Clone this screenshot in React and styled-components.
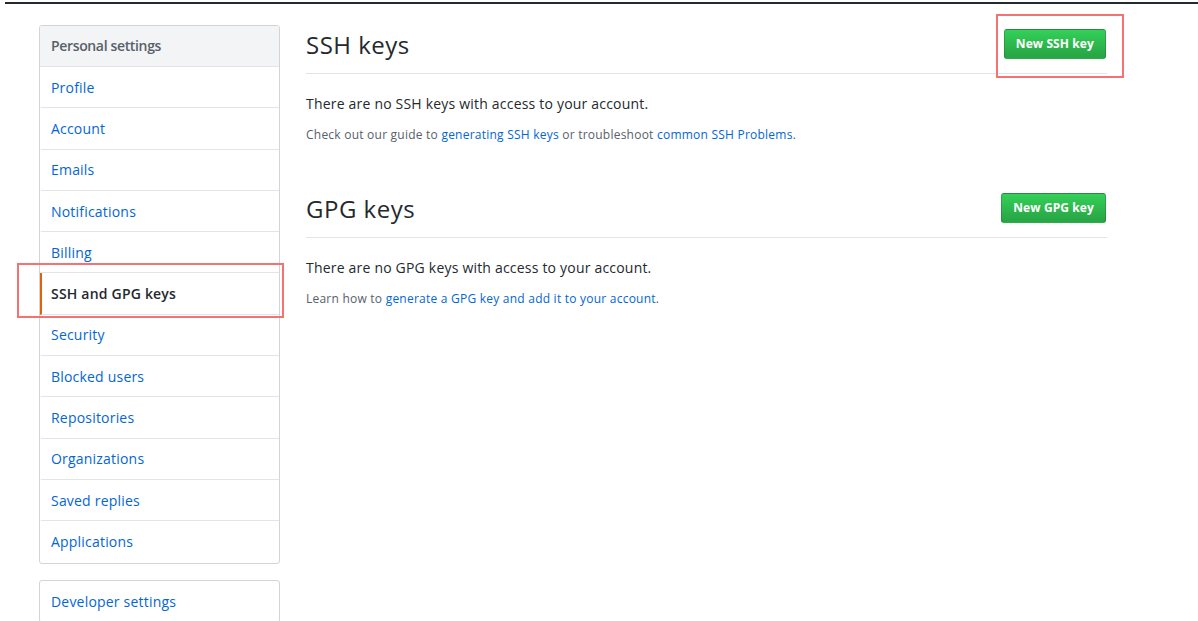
import React from "react";
import styled, { createGlobalStyle } from "styled-components";

const Global = createGlobalStyle`
  html, body { margin: 0; padding: 0; background: #fff; }
  body { font-family: "Open Sans", "Liberation Sans", sans-serif; color: #24292e; }
  * { box-sizing: border-box; }
`;

const Page = styled.div`
  position: relative;
  width: 1198px;
  height: 621px;
  overflow: hidden;
`;

const TopRule = styled.div`
  margin-left: 5px;
  margin-top: 2px;
  height: 2px;
  background: #24292e;
`;

const Layout = styled.div`
  display: flex;
  align-items: flex-start;
  padding: 21px 0 0 39px;
`;

const Sidebar = styled.nav`
  width: 241px;
  flex-shrink: 0;
  display: flex;
  flex-direction: column;
  gap: 16px;
`;

const Menu = styled.div`
  border: 1px solid #d1d5da;
  border-radius: 3px;
  overflow: hidden;
`;

const MenuHeading = styled.div`
  height: 41px;
  display: flex;
  align-items: center;
  padding: 0 11px 2px;
  background: #f3f4f6;
  border-bottom: 1px solid #e1e4e8;
  font-size: 14px;
  font-weight: 600;
  letter-spacing: -0.35px;
  color: #586069;
`;

const MenuItem = styled.a`
  display: flex;
  align-items: center;
  height: 41.3px;
  padding: 0 9px;
  font-size: 14px;
  letter-spacing: 0.2px;
  text-decoration: none;
  color: ${(p) => (p.$selected ? "#24292e" : "#0366d6")};
  font-weight: ${(p) => (p.$selected ? 600 : 400)};
  border-bottom: 1px solid #e1e4e8;
  border-left: 2px solid ${(p) => (p.$selected ? "#e36209" : "transparent")};
  &:last-child { border-bottom: none; }
`;

const Main = styled.main`
  margin-left: 26px;
  width: 801px;
  display: flex;
  flex-direction: column;
  gap: 46px;
`;

const Section = styled.section``;

const SectionHead = styled.div`
  display: flex;
  align-items: center;
  justify-content: space-between;
  height: 49px;
  border-bottom: 1px solid #e1e4e8;
  padding-bottom: 11px;
`;

const Title = styled.h2`
  margin: 0;
  padding-top: 3px;
  font-size: 24px;
  line-height: 32px;
  font-weight: 400;
  letter-spacing: 0.5px;
  color: #24292e;
`;

const GreenButton = styled.button`
  height: 30px;
  padding: 0 11px;
  margin-right: 1px;
  border: 1px solid rgba(27, 31, 35, 0.2);
  border-radius: 3px;
  background-image: linear-gradient(-180deg, #34d058 0%, #28a745 90%);
  color: #fff;
  font-family: inherit;
  font-size: 12px;
  font-weight: 700;
  letter-spacing: 0.1px;
  cursor: pointer;
`;

const Blank = styled.p`
  margin: 20px 0 0;
  font-size: 14px;
  line-height: 19px;
  letter-spacing: 0.2px;
  color: #24292e;
`;

const Note = styled.p`
  margin: 14px 0 0;
  font-size: 12px;
  line-height: 16px;
  letter-spacing: 0.23px;
  color: #586069;
`;

const Link = styled.a`
  color: #0366d6;
  text-decoration: none;
`;

const Annotation = styled.div`
  position: absolute;
  border: 2px solid #f37272;
  pointer-events: none;
  z-index: 2;
`;

const items = [
  "Profile",
  "Account",
  "Emails",
  "Notifications",
  "Billing",
  "SSH and GPG keys",
  "Security",
  "Blocked users",
  "Repositories",
  "Organizations",
  "Saved replies",
  "Applications",
];

export default function App() {
  return (
    <Page>
      <Global />
      <TopRule />
      <Layout>
        <Sidebar>
          <Menu>
            <MenuHeading>Personal settings</MenuHeading>
            {items.map((it) => (
              <MenuItem key={it} href="#" $selected={it === "SSH and GPG keys"}>
                {it}
              </MenuItem>
            ))}
          </Menu>
          <Menu>
            <MenuItem href="#">Developer settings</MenuItem>
          </Menu>
        </Sidebar>
        <Main>
          <Section>
            <SectionHead>
              <Title>SSH keys</Title>
              <GreenButton>New SSH key</GreenButton>
            </SectionHead>
            <Blank>There are no SSH keys with access to your account.</Blank>
            <Note>
              Check out our guide to <Link href="#">generating SSH keys</Link> or troubleshoot{" "}
              <Link href="#">common SSH Problems</Link>.
            </Note>
          </Section>
          <Section>
            <SectionHead>
              <Title>GPG keys</Title>
              <GreenButton>New GPG key</GreenButton>
            </SectionHead>
            <Blank>There are no GPG keys with access to your account.</Blank>
            <Note>
              Learn how to <Link href="#">generate a GPG key and add it to your account</Link>.
            </Note>
          </Section>
        </Main>
      </Layout>
      <Annotation style={{ left: 17, top: 263, width: 267, height: 55 }} />
      <Annotation style={{ left: 996, top: 14, width: 128, height: 64 }} />
    </Page>
  );
}
